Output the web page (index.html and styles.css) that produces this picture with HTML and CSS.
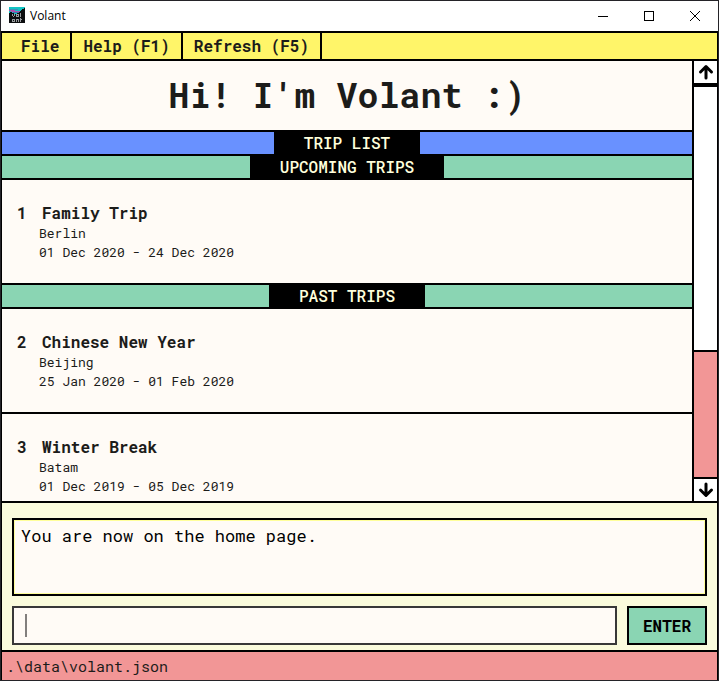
FILE: index.html
```html
<!DOCTYPE html>
<html lang="en">
<head>
<meta charset="utf-8">
<title>Volant</title>
<link rel="stylesheet" href="styles.css">
</head>
<body>
<div class="window">
  <header class="titlebar">
    <svg class="logo" width="16" height="16" viewBox="0 0 16 16" shape-rendering="crispEdges" aria-hidden="true">
      <path fill="#12c4c4" d="M0 0h16v7H0z"/>
      <path fill="#3d8fb8" d="M0 2h9v1H0zM4 4h9v1H4z"/>
      <path fill="#b04fb0" d="M0 3h6v1H0zM2 4h9v1H2z"/>
      <path fill="#4b70a8" d="M4 5h7v1H4z"/>
      <path fill="#0c0e10" d="M0 6h1V5h2v1h2v1h3V6h2V5h1V4h1V3h1V2h2V1h1v15H0z"/>
      <path fill="#9a9da0" d="M3 7h1v2H3zM5 7h1v2H5zM4 9h1v1H4zM7 7h2v1H7zM7 9h2v1H7zM7 8h1v1H7zM9 7h1v3H9zM11 6h1v4h-1zM3 12h3v1H3zM3 13h1v2H3zM4 14h1v1H4zM5 12h1v3H5zM7 12h3v1H7zM7 13h1v2H7zM9 13h1v2H9zM11 11h1v4h-1zM12 12h1v1h-1z"/>
    </svg>
    <span class="app-name">Volant</span>
    <button class="win-btn" aria-label="Minimize"><svg width="10" height="10" shape-rendering="crispEdges"><path d="M0 5.5h10"/></svg></button>
    <button class="win-btn" aria-label="Maximize"><svg width="10" height="10" shape-rendering="crispEdges"><path d="M.5.5h9v9h-9z"/></svg></button>
    <button class="win-btn" aria-label="Close"><svg width="10" height="10"><path d="M0 0l10 10M10 0L0 10"/></svg></button>
  </header>

  <nav class="menu">
    <button class="menu-item menu-first">File</button>
    <button class="menu-item">Help (F1)</button>
    <button class="menu-item">Refresh (F5)</button>
  </nav>

  <main class="main">
    <div class="content">
      <h1 class="greeting">Hi! I'm Volant :)</h1>
      <h2 class="band band-blue"><span class="tag">TRIP LIST</span></h2>
      <h3 class="band"><span class="tag">UPCOMING TRIPS</span></h3>
      <article class="trip">
        <h4 class="trip-name"><span class="num">1</span>Family Trip</h4>
        <p class="detail">Berlin</p>
        <p class="detail">01 Dec 2020 - 24 Dec 2020</p>
      </article>
      <h3 class="band"><span class="tag">PAST TRIPS</span></h3>
      <article class="trip">
        <h4 class="trip-name"><span class="num">2</span>Chinese New Year</h4>
        <p class="detail">Beijing</p>
        <p class="detail">25 Jan 2020 - 01 Feb 2020</p>
      </article>
      <article class="trip">
        <h4 class="trip-name"><span class="num">3</span>Winter Break</h4>
        <p class="detail">Batam</p>
        <p class="detail">01 Dec 2019 - 05 Dec 2019</p>
      </article>
    </div>
    <div class="scrollbar">
      <button class="arrow arrow-up" aria-label="Scroll up"><svg width="16" height="16"><path d="M8 14V3M2.500 8l5.500-5.500 5.500 5.500"/></svg></button>
      <div class="track"></div>
      <div class="thumb"></div>
      <button class="arrow" aria-label="Scroll down"><svg width="16" height="16"><path d="M8 2v11M2.500 8l5.500 5.500 5.500-5.500"/></svg></button>
    </div>
  </main>

  <section class="console">
    <div class="message" role="status">You are now on the home page.</div>
    <form class="command">
      <div class="field">
        <span class="caret"></span>
        <input class="input" type="text" aria-label="Command">
      </div>
      <button class="enter" type="button">ENTER</button>
    </form>
  </section>

  <footer class="footer">.\data\volant.json</footer>
</div>
</body>
</html>
```
FILE: styles.css
```css
* {
  box-sizing: border-box;
  margin: 0;
}

body,
button,
input {
  font-family: "Roboto Mono", "Liberation Mono", monospace;
  font-size: 16px;
}

button {
  padding: 0;
  border: 0;
  background: none;
  color: inherit;
}

.window {
  display: flex;
  flex-direction: column;
  height: 100vh;
  border: 1px solid #242328;
  background: #000;
  color: #1c1c1a;
}

.titlebar {
  display: flex;
  align-items: stretch;
  height: 30px;
  padding-left: 8px;
  background: #fff;
}

.logo {
  margin-top: 6px;
}

.app-name {
  flex: 1;
  padding-left: 5px;
  font: 12px/30px "Open Sans", "Noto Sans", sans-serif;
  color: #000;
}

.win-btn {
  display: grid;
  place-items: center;
  width: 46px;
}

.win-btn path {
  fill: none;
  stroke: #000;
}

.menu,
.main,
.console,
.footer {
  margin: 2px 1px 0;
}

.menu {
  display: flex;
  height: 26px;
  background: #fff569;
}

.menu-item {
  padding: 0 11px 2px;
  border-right: 2px solid #000;
  font-weight: 700;
}

.menu-first {
  padding-left: 19px;
}

.main {
  display: flex;
  flex: 1;
  gap: 2px;
  min-height: 0;
}

.content {
  flex: 1;
  overflow: hidden;
  background: #fffbf6;
}

.greeting {
  padding-bottom: 2px;
  font-size: 35px;
  line-height: 67px;
  text-align: center;
}

.band {
  display: flex;
  justify-content: center;
  height: 26px;
  margin-top: -2px;
  border: solid #000;
  border-width: 2px 0;
  background: #8ad5b3;
}

.greeting + .band {
  margin-top: 0;
}

.band-blue {
  background: #6991ff;
}

.tag {
  padding: 0 30px;
  background: #000;
  color: #ffffdc;
  font-size: 16px;
  font-weight: 500;
  line-height: 22px;
}

.trip {
  padding: 23px 15px 21px;
  border-bottom: 2px solid #000;
}

.trip-name {
  display: flex;
  margin-bottom: 1px;
  font-size: 16px;
  line-height: 20px;
}

.num {
  width: 25px;
}

.detail {
  padding-left: 22px;
  font-size: 13px;
  line-height: 19px;
}

.scrollbar {
  display: flex;
  flex-direction: column;
  gap: 2px;
  width: 23px;
}

.arrow {
  display: grid;
  place-items: center;
  height: 22px;
  background: #fff;
}

.arrow-up {
  margin-bottom: 2px;
}

.arrow path {
  fill: none;
  stroke: #000;
  stroke-width: 3;
  stroke-linecap: round;
  stroke-linejoin: round;
}

.track {
  flex: 263;
  background: #fff;
}

.thumb {
  flex: 125;
  background: #f29696;
}

.console {
  padding: 15px 10px 5px;
  background: #fafbdc;
}

.message {
  height: 78px;
  padding: 4px 7px;
  border: 2px solid #000;
  outline: 1px solid #ffff9b;
  outline-offset: -3px;
  background: #fffbf6;
  color: #000;
  font-size: 17px;
  line-height: 24px;
}

.command {
  display: flex;
  gap: 10px;
  height: 39px;
  margin-top: 10px;
}

.field {
  display: flex;
  flex: 1;
  align-items: center;
  gap: 2px;
  padding: 0 11px;
  border: 2px solid #383838;
  background: #fffbf6;
}

.caret {
  width: 2px;
  height: 23px;
  background: #827f7d;
}

.input {
  flex: 1;
  min-width: 0;
  padding: 0;
  border: 0;
  outline: 0;
  background: none;
}

.enter {
  width: 80px;
  border: 2px solid #000;
  background: #8ad5b3;
  color: #000;
  font-weight: 700;
}

.footer {
  padding-left: 4px;
  background: #f29696;
  font-size: 15px;
  line-height: 28px;
}
```
